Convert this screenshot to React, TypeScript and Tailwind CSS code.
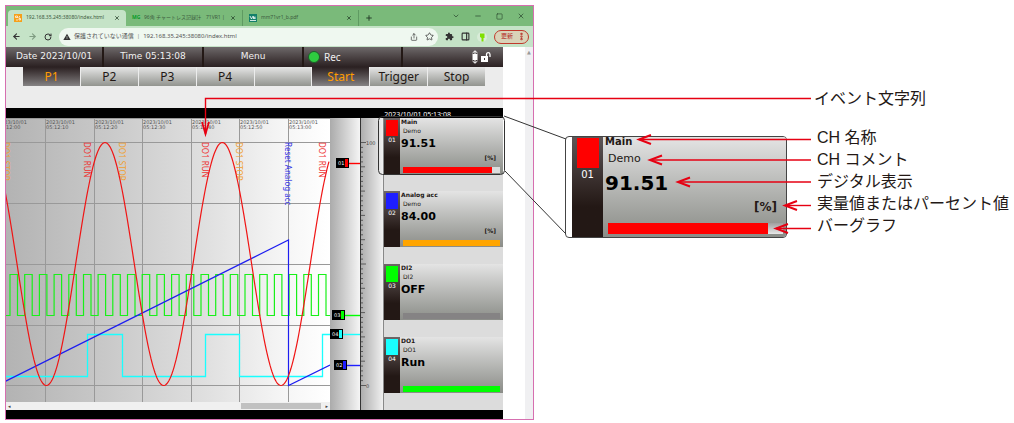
import { useState } from "react";
import clsx from "clsx";
import { ArrowLeft, ArrowRight, ChevronDown, EllipsisVertical, Minus, PanelRight, Plus, RotateCw, Share, Square, Star, X } from "lucide-react";
import { MdExtension, MdWarning } from "react-icons/md";

type Channel = {
  no: string;
  name: string;
  comment: string;
  value: string;
  unit: string;
  swatch: string;
  bar: string;
  level: number;
};

const channels: Channel[] = [
  { no: "01", name: "Main", comment: "Demo", value: "91.51", unit: "[%]", swatch: "bg-[#ff0000]", bar: "bg-[#ff0000]", level: 91.5 },
  { no: "02", name: "Analog acc", comment: "Demo", value: "84.00", unit: "[%]", swatch: "bg-[#1e1eff]", bar: "bg-[#ffa500]", level: 100 },
  { no: "03", name: "DI2", comment: "DI2", value: "OFF", unit: "", swatch: "bg-[#00ff00]", bar: "bg-[#858384]", level: 100 },
  { no: "04", name: "DO1", comment: "DO1", value: "Run", unit: "", swatch: "bg-[#19ffff]", bar: "bg-[#00ff00]", level: 100 },
];

const pages = ["P1", "P2", "P3", "P4"];
const actions = ["Start", "Trigger", "Stop"];

const timeMarks = [
  { x: -3, time: "05:12:00" },
  { x: 45, time: "05:12:10" },
  { x: 94, time: "05:12:20" },
  { x: 142, time: "05:12:30" },
  { x: 191, time: "05:12:40" },
  { x: 239, time: "05:12:50" },
  { x: 288, time: "05:13:00" },
];

const events = [
  { x: 3, text: "DO1 STOP", color: "#f0a030" },
  { x: 84, text: "DO1 RUN", color: "#ee3333" },
  { x: 119, text: "DO1 STOP", color: "#f0a030" },
  { x: 202, text: "DO1 RUN", color: "#ee3333" },
  { x: 236, text: "DO1 STOP", color: "#f0a030" },
  { x: 285, text: "Reset Analog acc", color: "#3333e6" },
  { x: 319, text: "DO1 RUN", color: "#ee3333" },
];

const pens = [
  { no: "01", x: 336, y: 163, color: "#ff0000" },
  { no: "03", x: 332, y: 315, color: "#00ff00" },
  { no: "04", x: 330, y: 334, color: "#19ffff" },
  { no: "02", x: 334, y: 365, color: "#1e1eff" },
];

function sinePath() {
  let d = "";
  for (let x = 5; x <= 329; x += 1) {
    const y = 264 - 121.5 * Math.cos(((x - 105) / 117.3) * 2 * Math.PI);
    d += `${d ? "L" : "M"}${x} ${y.toFixed(1)}`;
  }
  return d;
}

function pulsePath() {
  let d = "M5 315.5";
  for (let i = 0; i < 22; i += 1) {
    const x = 10 + i * 14.69;
    d += `H${x.toFixed(1)}V274.5H${(x + 7.5).toFixed(1)}V315.5`;
  }
  return d + "H330";
}

export default function App() {
  return (
    <main className="relative grid grid-cols-[529fr_480fr] bg-white pt-[5px] pb-[3px] pl-[5px] font-['DejaVu_Sans',sans-serif] text-[#231815]">
      <BrowserWindow />
      <aside className="grid grid-cols-[31fr_222fr_27fr_200fr] items-start">
        <div className="col-start-2 mt-[131px]">
          <LargeCard channel={channels[0]} />
        </div>
        <Legend />
      </aside>
      <Leaders />
    </main>
  );
}

function BrowserWindow() {
  return (
    <section className="min-w-0 border border-[#d66fb0] bg-white">
      <TabStrip />
      <Toolbar />
      <div className="grid grid-cols-[497fr_30fr]">
        <Recorder />
        <div className="flex justify-end">
          <div className="w-2 bg-[#f0f0f2] pt-0.5 text-center text-[5px] leading-[6px] text-[#999]">▲</div>
        </div>
      </div>
    </section>
  );
}

function TabStrip() {
  return (
    <header className="grid h-5 grid-cols-[118fr_117fr_116fr_174fr] items-end bg-[#7aba7a] pl-0.5 font-['Noto_Sans','Noto_Sans_CJK_JP',sans-serif] text-[5px] text-[#3c5a3e]">
      <BrowserTab title="192.168.35.245:38080/index.html" active>
        <svg viewBox="0 0 8 8" className="size-2 shrink-0">
          <rect width="8" height="8" fill="#f6a01a" />
          <path d="M1.500 2h2v1.500h-2zM5 4.500h1.500V6H5zM3.500 3.500h1M2 6h2M5.500 2v1.500" stroke="#fff" strokeWidth=".7" fill="none" />
        </svg>
      </BrowserTab>
      <BrowserTab title="96角 チャートレス記録計　71VR1 |">
        <span className="w-2 shrink-0 text-[5px] font-bold text-[#0b9a2b]">MG</span>
      </BrowserTab>
      <BrowserTab title="mm71vr1_b.pdf">
        <svg viewBox="0 0 8 8" className="size-2 shrink-0">
          <rect width="8" height="8" fill="#14806a" />
          <path d="M1 2l1.500 3L4 2M4.500 5V2.500L6 5V2.500M1 6.500h6" stroke="#fff" strokeWidth=".8" fill="none" />
        </svg>
      </BrowserTab>
      <div className="flex h-full items-center justify-between pr-2 pl-1.5 text-[#26402a]">
        <button type="button" aria-label="New tab" className="pt-1">
          <Plus size={8} strokeWidth={3} />
        </button>
        <div className="flex gap-[14px]">
          <button type="button" aria-label="Tab search"><ChevronDown size={8} /></button>
          <button type="button" aria-label="Minimize"><Minus size={8} /></button>
          <button type="button" aria-label="Maximize"><Square size={7} /></button>
          <button type="button" aria-label="Close"><X size={8} /></button>
        </div>
      </div>
    </header>
  );
}

function BrowserTab({ title, active, children }: { title: string; active?: boolean; children: React.ReactNode }) {
  return (
    <div className={clsx("flex h-4 min-w-0 items-center gap-1 px-1.5", active ? "rounded-t-[4px] bg-[#c5e3c7]" : "border-r border-[#5f9a62]")}>
      {children}
      <span className="flex-1 overflow-hidden whitespace-nowrap">{title}</span>
      <button type="button" aria-label="Close tab" className="text-[#26402a]">
        <X size={6} strokeWidth={3} />
      </button>
    </div>
  );
}

function Toolbar() {
  return (
    <div className="flex h-[21px] items-center gap-[7px] bg-[#c5e3c7] pr-1 pl-1.5 font-['Noto_Sans','Noto_Sans_CJK_JP',sans-serif] text-[6px] text-[#333]">
      <button type="button" aria-label="Back"><ArrowLeft size={9} strokeWidth={3} /></button>
      <button type="button" aria-label="Forward" className="text-[#7f9c82]"><ArrowRight size={9} strokeWidth={3} /></button>
      <button type="button" aria-label="Reload"><RotateCw size={8} strokeWidth={3} /></button>
      <div className="flex h-[18px] min-w-0 flex-1 items-center gap-[3px] rounded-full bg-[#eff8f0] px-1">
        <MdWarning size={8} className="shrink-0" />
        <label htmlFor="address" className="whitespace-nowrap text-[#555]">保護されていない通信</label>
        <span className="text-[#888]">|</span>
        <input id="address" defaultValue="192.168.35.245:38080/index.html" className="min-w-0 flex-1 bg-transparent text-[#555] outline-none" />
        <Share size={8} className="shrink-0" />
        <Star size={9} className="ml-1 shrink-0" />
      </div>
      <button type="button" aria-label="Extensions"><MdExtension size={9} /></button>
      <button type="button" aria-label="Side panel"><PanelRight size={9} strokeWidth={3} /></button>
      <button type="button" aria-label="Profile">
        <svg viewBox="0 0 10 12" className="h-3 w-2.5">
          <circle cx="5" cy="6" r="5" fill="#d8ecd8" />
          <path d="M3 2.500h4.500V7H6.500v3.500h-2V7L3 6z" fill="#7fe000" />
        </svg>
      </button>
      <button type="button" className="flex h-[14px] items-center gap-1 rounded-full border border-[#c0392b] bg-[#d9d3b8] pr-0.5 pl-1.5 text-[#b3261e]">
        更新
        <EllipsisVertical size={9} strokeWidth={4} />
      </button>
    </div>
  );
}

function Recorder() {
  return (
    <div className="min-w-0 bg-[#ececec]">
      <div className="grid h-5 grid-cols-[98fr_100fr_100fr_99fr_100fr] divide-x-2 divide-[#231815] bg-linear-to-b from-[#6e696a] to-[#2b2122] text-[9px] text-[#f0f0f0]">
        <div className="flex items-center justify-center">Date 2023/10/01</div>
        <div className="flex items-center justify-center">Time 05:13:08</div>
        <button type="button">Menu</button>
        <div className="flex items-center gap-1 pl-1 font-['Noto_Sans',sans-serif] text-[10px]">
          <span className="size-3 rounded-full border border-[#1d5c2a] bg-[#2ecc40]" />
          Rec
        </div>
        <div className="flex items-center justify-end gap-0.5 pr-3">
          <svg viewBox="0 0 8 14" className="h-3.5 w-2">
            <path d="M1.500 4h5v6h-5z" fill="#fff" />
            <path d="M4 4V.8M1.500 3L4 .8 6.500 3M4 10v3.200M1.500 11L4 13.200 6.500 11" fill="none" stroke="#fff" />
          </svg>
          <svg viewBox="0 0 10 10" className="size-2.5">
            <path d="M0 4h7v6H0zM3 6v2h1V6z" fill="#fff" fillRule="evenodd" />
            <path d="M5.500 4V2.500Q5.500.7 7.200.7T9 2.500V5" fill="none" stroke="#fff" strokeWidth="1.300" />
          </svg>
        </div>
      </div>
      <PageTabs />
      <div className="h-2.5 overflow-hidden bg-black pr-[52px] text-right font-['Noto_Sans',sans-serif] text-[7px] leading-[13px] text-white">2023/10/01 05:13:08</div>
      <div className="grid grid-cols-[324fr_30fr_23fr_120fr]">
        <TrendChart />
        <PenColumn />
        <ScaleColumn />
        <div className="flex flex-col gap-[17px] border-l border-[#888] bg-[#dcdcdc]">
          {channels.map((channel) => (
            <SmallCard key={channel.no} channel={channel} />
          ))}
        </div>
      </div>
      <div className="h-[9px] bg-black" />
    </div>
  );
}

function PageTabs() {
  const [page, setPage] = useState("P1");
  const [action, setAction] = useState("Start");

  return (
    <nav className="mb-[22px] flex h-[19px] gap-px pr-[18px] pl-[17px]">
      {pages.map((label) => (
        <TabButton key={label} label={label} active={label === page} onClick={() => setPage(label)} />
      ))}
      <div className="flex-1 bg-linear-to-b from-[#e6e6e6] to-[#92948f]" />
      {actions.map((label) => (
        <TabButton key={label} label={label} active={label === action} onClick={() => setAction(label)} />
      ))}
    </nav>
  );
}

function TabButton({ label, active, onClick }: { label: string; active: boolean; onClick: () => void }) {
  return (
    <button
      type="button"
      onClick={onClick}
      className={clsx(
        "min-w-0 flex-1 basis-0 bg-linear-to-b font-['Noto_Sans',sans-serif] text-xs",
        active ? "from-[#2b2122] to-[#858384] text-[#ff9c00]" : "from-[#e6e6e6] to-[#92948f] text-[#231815]",
      )}
    >
      {label}
    </button>
  );
}

function TrendChart() {
  return (
    <div className="flex min-w-0 flex-col">
      <svg viewBox="6 118 324 284" className="w-full">
        <defs>
          <linearGradient id="paper">
            <stop offset="0" stopColor="#b3b3b3" />
            <stop offset=".3" stopColor="#c8c8c8" />
            <stop offset=".6" stopColor="#dedede" />
            <stop offset=".85" stopColor="#f5f5f5" />
            <stop offset="1" stopColor="#ffffff" />
          </linearGradient>
        </defs>
        <rect x="6" y="118" width="324" height="284" fill="url(#paper)" />
        <path d="M6 118.500H330M6 142.500H330M6 203.500H330M6 264.500H330M6 325.500H330M6 385.500H330" stroke="#999" />
        {timeMarks.map((mark) => (
          <g key={mark.time} fontSize="5" fill="#555">
            <path d={`M${mark.x + 0.5} 118V402`} stroke="#999" />
            <text x={mark.x + 1} y="124">2023/10/01</text>
            <text x={mark.x + 1} y="129">{mark.time}</text>
          </g>
        ))}
        {events.map((event) => (
          <text key={event.x} transform={`translate(${event.x} 142) rotate(90)`} fontFamily="Noto Sans, sans-serif" fontSize="8" fill={event.color}>
            {event.text}
          </text>
        ))}
        <g fill="none">
          <path d={pulsePath()} stroke="#19f019" strokeWidth="1.200" />
          <path d="M5 376.500H87.500V334.500H122.500V376.500H205.500V334.500H239.500V376.500H322.500V334.500H330" stroke="#19ffff" strokeWidth="1.300" />
          <path d="M5 381.500L288.500 240V385.500L330 365" stroke="#1e1ef0" strokeWidth="1.200" />
          <path d={sinePath()} stroke="#f01414" strokeWidth="1.200" />
        </g>
      </svg>
      <div className="flex h-2 items-center bg-[#f0f0f0] px-0.5 text-[5px] leading-none text-[#444]">
        <span>◂</span>
        <div className="ml-auto h-1.5 w-1/4 bg-[#c1c1c1]" />
        <span className="ml-1">▸</span>
      </div>
    </div>
  );
}

function PenColumn() {
  return (
    <div className="bg-linear-to-r from-[#ababab] to-[#f5f5f5]">
      <svg viewBox="330 118 30 292" className="w-full">
        {pens.map((pen) => (
          <g key={pen.no}>
            <path d={`M${pen.x + 12} ${pen.y + 0.5}H360`} stroke={pen.color} strokeWidth="1.400" />
            <rect x={pen.x} y={pen.y - 5} width="13" height="10" fill="#000" />
            <rect x={pen.x + 9} y={pen.y - 4} width="3" height="8" fill={pen.color} />
            <text x={pen.x + 2} y={pen.y + 2} fontSize="5" fill="#fff">{pen.no}</text>
          </g>
        ))}
      </svg>
    </div>
  );
}

function ScaleColumn() {
  const ticks = Array.from({ length: 51 }, (_, i) => ({ y: 142.5 + i * 4.86, length: i % 25 === 0 ? 5 : i % 5 === 0 ? 4 : 2 }));

  return (
    <div className="bg-linear-to-r from-[#ababab] to-[#f0f0f0]">
      <svg viewBox="360 118 23 292" className="w-full">
        <path d="M360.500 118V410" stroke="#333" />
        {ticks.map((tick) => (
          <path key={tick.y} d={`M361 ${tick.y.toFixed(1)}h${tick.length}`} stroke="#444" strokeWidth=".8" />
        ))}
        <text x="366" y="145" fontSize="5" fill="#444">100</text>
        <text x="366" y="388" fontSize="5" fill="#444">0</text>
      </svg>
    </div>
  );
}

function SmallCard({ channel }: { channel: Channel }) {
  return (
    <article className="flex h-14">
      <div className="flex w-4 flex-col items-center bg-linear-to-b from-[#6e6667] to-[#231815] to-70% pt-0.5 text-[6px] leading-2 text-white">
        <span className={clsx("h-4 w-3", channel.swatch)} />
        {channel.no}
      </div>
      <div className="min-w-0 flex-1 bg-linear-to-b from-[#e4e4e4] to-[#8b8d88] pr-[3px] pl-px">
        <h3 className="text-[6px] leading-2 font-bold">{channel.name}</h3>
        <p className="pl-0.5 text-[6px] leading-[10px]">{channel.comment}</p>
        <p className="text-[11px] leading-4 font-bold text-black">{channel.value}</p>
        <p className="h-3 pr-1 text-right text-[6px] leading-3 font-bold">{channel.unit}</p>
        <div className="mt-[3px] ml-0.5 h-1.5 bg-[#dcdcdc]">
          <div className={clsx("h-full", channel.bar)} style={{ width: `${channel.level}%` }} />
        </div>
      </div>
    </article>
  );
}

function LargeCard({ channel }: { channel: Channel }) {
  return (
    <article className="flex h-[102px] overflow-hidden rounded-[4px] border border-[#444] bg-white pl-1.5">
      <div className="flex w-[31px] flex-col items-center bg-linear-to-b from-[#5e5657] to-[#231815] to-70% pt-px text-[10px] leading-[14px] text-white">
        <span className={clsx("h-[30px] w-[22px]", channel.swatch)} />
        {channel.no}
      </div>
      <div className="min-w-0 flex-1 bg-linear-to-b from-[#e4e4e4] to-[#8b8d88] pr-[3px] pl-0.5">
        <h2 className="text-[10px] leading-[10px] font-bold">{channel.name}</h2>
        <p className="pl-[3px] text-[11px] leading-6">{channel.comment}</p>
        <p className="text-[20px] leading-6 font-bold text-black">{channel.value}</p>
        <p className="pr-1.5 text-right text-[12px] leading-6 font-bold">{channel.unit}</p>
        <div className="mt-1 ml-[3px] h-[11px] bg-linear-to-b from-[#a0a0a0] to-[#e8e8e8]">
          <div className={clsx("h-full", channel.bar)} style={{ width: `${channel.level}%` }} />
        </div>
      </div>
    </article>
  );
}

function Legend() {
  return (
    <ul className="col-start-4 mt-[83px] font-['Liberation_Sans','Noto_Sans_CJK_JP',sans-serif] text-base leading-[22px] whitespace-nowrap">
      <li className="mb-[17px]">イベント文字列</li>
      <li className="pl-[3px]">CH 名称</li>
      <li className="pl-[3px]">CH コメント</li>
      <li className="pl-[3px]">デジタル表示</li>
      <li className="pl-[3px]">実量値またはパーセント値</li>
      <li className="pl-[3px]">バーグラフ</li>
    </ul>
  );
}

const arrows = [
  { x: 637, y: 139.5 },
  { x: 648, y: 160 },
  { x: 676, y: 182 },
  { x: 783, y: 205.5 },
  { x: 774, y: 228.5 },
];

// Callout lines that join the legend to the live screen and the enlarged card.
function Leaders() {
  return (
    <svg viewBox="0 0 1014 423" preserveAspectRatio="none" className="pointer-events-none absolute inset-0 h-full w-full" fill="none" aria-hidden="true">
      <rect x="378.500" y="116.500" width="126" height="58" rx="4" stroke="#333" />
      <path d="M504 116L566 139M505 171L566 234" stroke="#333" />
      <g stroke="#e60012" strokeWidth="1.400">
        <path d="M811 98.500H205.500V134" />
        <path d="M202 122L205.500 134L209 122" strokeWidth="1.800" />
        {arrows.map((arrow) => (
          <g key={arrow.y}>
            <path d={`M${arrow.x + 2} ${arrow.y}H811`} />
            <path d={`M${arrow.x + 14} ${arrow.y - 4.5}L${arrow.x + 2} ${arrow.y}L${arrow.x + 14} ${arrow.y + 4.5}`} strokeWidth="2" />
          </g>
        ))}
      </g>
    </svg>
  );
}
